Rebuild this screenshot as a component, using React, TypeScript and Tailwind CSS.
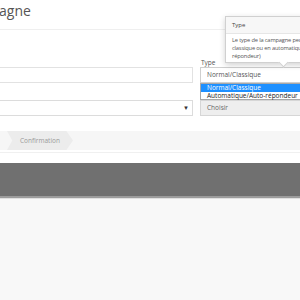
import React from 'react';

const App: React.FC = () => {
    return (
        <div className="w-[300px] h-[300px] overflow-hidden bg-[#f8f8f8] font-['Open_Sans',sans-serif]">
            <div className="bg-white">
                <header className="h-[30px] border-b border-[#efefef] pt-[1px]">
                    <h1 className="text-[14px] leading-[20px] text-[#555] -ml-[1px]">agne</h1>
                </header>

                <div className="flex gap-[7px] pt-[28px]">
                    <div className="w-[193px] flex flex-col">
                        <div className="h-[9px]"></div>
                        <div className="h-[16px] border border-[#e2e2e2] border-l-0 bg-white"></div>
                        <div className="h-[17px]"></div>
                        <div className="h-[16px] border border-[#dcdcdc] border-l-0 bg-white flex items-center justify-end pr-[3px]">
                            <span className="text-[6px] text-[#333]">▼</span>
                        </div>
                    </div>
                    <div className="flex-1 flex flex-col relative">
                        <label className="text-[6.5px] leading-[9px] text-[#555] pl-[1px]">Type</label>
                        <div className="h-[16px] border border-[#cfcfcf] border-r-0 bg-white flex items-center pl-[6px] text-[6.5px] text-[#555]">
                            Normal/Classique
                        </div>
                        <div className="h-[17px]"></div>
                        <div className="h-[16px] border border-[#d6d6d6] border-r-0 bg-[#eeeeee] flex items-center pl-[6px] text-[6.5px] text-[#666]">
                            Choisir
                        </div>

                        <ul className="absolute left-0 right-0 top-[25px] bg-white border border-[#a8a8a8] border-r-0 text-[6.5px] leading-[7.5px]">
                            <li className="bg-[#1e90ff] text-white pl-[6px]">Normal/Classique</li>
                            <li className="text-[#222] pl-[6px]">Automatique/Auto-répondeur</li>
                        </ul>

                        <div className="absolute left-[25px] top-[-42px] w-[112px] bg-white border border-[#d0d0d0] shadow-[0_2px_6px_rgba(0,0,0,0.18)]">
                            <div className="bg-[#f7f7f7] border-b border-[#e6e6e6] h-[17px] flex items-center pl-[6px] text-[6px] text-[#444]">Type</div>
                            <p className="px-[6px] py-[2px] text-[5.7px] leading-[8px] tracking-[-0.15px] text-[#555]">
                                Le type de la campagne peut être classique ou en automatique (auto-répondeur)
                            </p>
                            <div className="absolute left-[54px] -bottom-[4px] w-[7px] h-[7px] bg-white border-r border-b border-[#d0d0d0] rotate-45"></div>
                        </div>
                    </div>
                </div>

                <div className="mt-[15px] h-[19px] bg-[#f6f6f6] flex items-center">
                    <div className="ml-[7px] h-[19px] w-[66px] bg-[#ececec] [clip-path:polygon(0_0,90%_0,100%_50%,90%_100%,0_100%,8%_50%)] flex items-center pl-[13px] text-[6.5px] text-[#9a9a9a]">
                        Confirmation
                    </div>
                </div>
                <div className="h-[11px] border-t border-[#f0f0f0] mt-[2px]"></div>
            </div>

            <div className="h-[35px] bg-[#707070] border-b-[2px] border-[#9c9c9c]"></div>
            <div className="h-[1px] bg-[#e0e0e0]"></div>
        </div>
    );
};

export default App;
